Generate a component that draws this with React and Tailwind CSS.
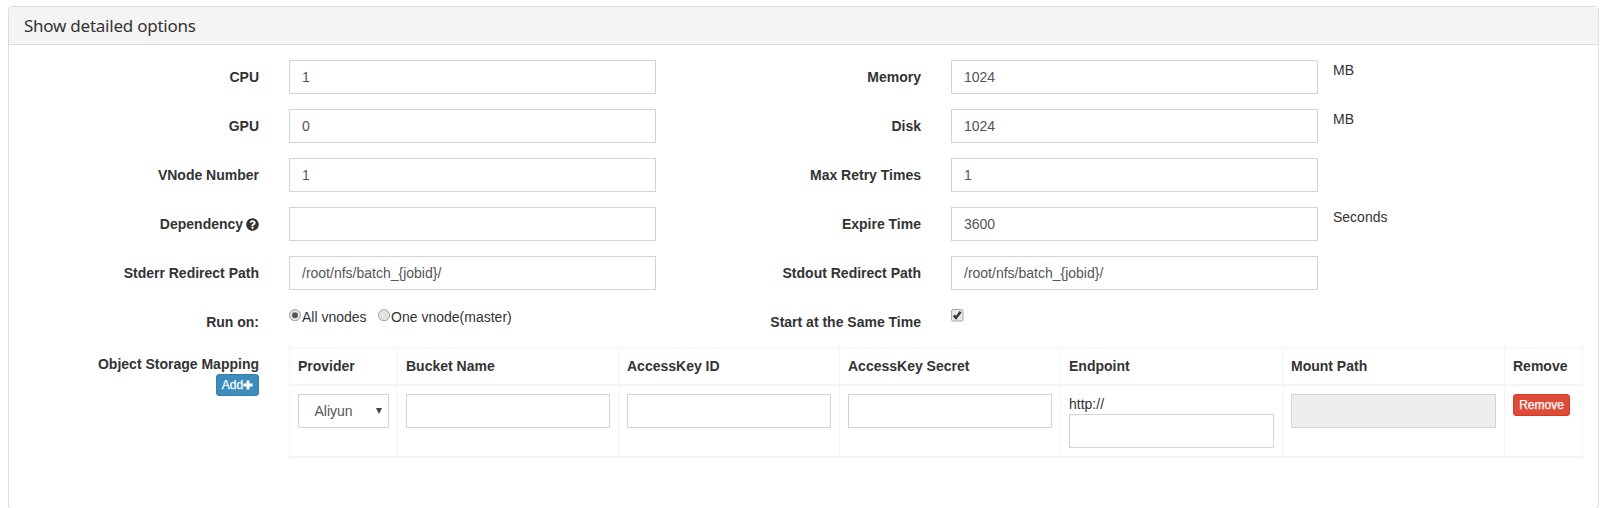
import { FaQuestionCircle } from "react-icons/fa";

const labelText = "font-bold text-[#333]";
const inputBase =
  "block h-[34px] w-full rounded-none border border-[#d2d4d9] bg-white px-3 text-[14px] leading-5 text-[#555] outline-none";

function Label({ children }) {
  return (
    <label className={`${labelText} w-[265px] shrink-0 pr-[15px] pt-[7px] text-right`}>
      {children}
    </label>
  );
}

function Field({ label, value, unit }) {
  return (
    <div className="flex">
      <Label>{label}</Label>
      <div className="w-[397px] shrink-0 px-[15px]">
        <input className={inputBase} defaultValue={value} />
      </div>
      {unit && <span>{unit}</span>}
    </div>
  );
}

function Radio({ checked }) {
  return (
    <svg className="h-[13px] w-[13px]" viewBox="0 0 13 13">
      <circle cx="6" cy="6.2" r="5.6" fill="#e2e2e2" stroke="#a4a4a4" />
      {checked && <circle cx="6" cy="6.2" r="2.9" fill="#555" />}
    </svg>
  );
}

function Checkbox() {
  return (
    <svg className="h-[13px] w-[13px]" viewBox="0 0 13 13">
      <rect x="0.5" y="0.5" width="11.5" height="11.5" rx="1.5" fill="#e6e6e6" stroke="#a8a8a8" />
      <path d="M2.8 6.4 L5 8.9 L9.6 2.8" fill="none" stroke="#333" strokeWidth="2.4" />
    </svg>
  );
}

const leftFields = [
  { label: "CPU", value: "1" },
  { label: "GPU", value: "0" },
  { label: "VNode Number", value: "1" },
  {
    label: (
      <>
        Dependency <FaQuestionCircle className="-ml-px inline h-[13px] w-[13px] align-[-2px]" />
      </>
    ),
    value: "",
  },
  { label: "Stderr Redirect Path", value: "/root/nfs/batch_{jobid}/" },
];

const rightFields = [
  { label: "Memory", value: "1024", unit: "MB" },
  { label: "Disk", value: "1024", unit: "MB" },
  { label: "Max Retry Times", value: "1" },
  { label: "Expire Time", value: "3600", unit: "Seconds" },
  { label: "Stdout Redirect Path", value: "/root/nfs/batch_{jobid}/" },
];

const headings = [
  "Provider",
  "Bucket Name",
  "AccessKey ID",
  "AccessKey Secret",
  "Endpoint",
  "Mount Path",
  "Remove",
];

const cell = "border-l border-[#f4f4f4] p-2";

export default function App() {
  return (
    <div className="h-[508px] overflow-hidden bg-white pl-2 pt-1.5 font-['Liberation_Sans',Arial,sans-serif] text-[14px] leading-5 text-[#333]">
      <section className="h-[503px] w-[1591px] rounded-[4px] border border-[#ddd]">
        <header className="h-[38px] rounded-t-[3px] border-b border-[#ddd] bg-[#f4f4f4] pl-[15px] font-['Noto_Sans',sans-serif] text-[17px] leading-[38px] tracking-[-0.24px]">
          Show detailed options
        </header>

        <div className="pt-[15px]">
          <div className="flex">
            <div className="flex w-[662px] flex-col gap-[15px]">
              {leftFields.map((f, i) => (
                <Field key={i} {...f} />
              ))}
              <div className="flex h-[27px]">
                <Label>Run on:</Label>
                <div className="flex pl-[15px]">
                  <span className="flex pt-[4px]">
                    <Radio checked />
                  </span>
                  <span className="pt-[2px]">All vnodes</span>
                  <span className="flex pl-[11px] pt-[4px]">
                    <Radio />
                  </span>
                  <span className="pl-[0.5px] pt-[2px]">One vnode(master)</span>
                </div>
              </div>
            </div>
            <div className="flex flex-col gap-[15px]">
              {rightFields.map((f, i) => (
                <Field key={i} {...f} />
              ))}
              <div className="flex h-[27px]">
                <Label>Start at the Same Time</Label>
                <span className="pl-[15px] pt-[4px]">
                  <Checkbox />
                </span>
              </div>
            </div>
          </div>

          <div className="mt-[15px] flex">
            <div className="flex w-[265px] shrink-0 flex-col items-end pr-[15px] pt-[7px]">
              <span className={labelText}>Object Storage Mapping</span>
              <button className="flex h-[22px] w-[43px] items-center justify-center rounded-[3px] border border-[#367fa9] bg-[#3c8dbc] text-[12px] leading-[18px] text-white [-webkit-text-stroke:0.25px_white]">
                Add
                <svg className="h-[10px] w-[10px]" viewBox="0 0 10 10">
                  <path d="M3.6 0.5H6.4V3.6H9.6V6.4H6.4V9.5H3.6V6.4H0.4V3.6H3.6Z" fill="#fff" stroke="none" />
                </svg>
              </button>
            </div>

            <div className="ml-[15px] w-[1294px] border-r border-[#f4f4f4]">
              <div className="grid grid-cols-[108px_221px_221px_221px_222px_222px_78px] border-b-2 border-t border-[#f4f4f4]">
                {headings.map((h) => (
                  <div key={h} className={`${cell} font-bold`}>
                    {h}
                  </div>
                ))}
              </div>
              <div className="grid grid-cols-[108px_221px_221px_221px_222px_222px_78px] border-b-2 border-[#f4f4f4]">
                <div className={cell}>
                  <div className="flex h-[34px] w-[91px] items-center justify-between border border-[#d2d4d9] pl-[15.5px] pr-[6px] text-[#555]">
                    Aliyun
                    <svg className="h-[6px] w-[6px]" viewBox="0 0 6 6">
                      <path d="M0 0H6L3 6Z" fill="#444" />
                    </svg>
                  </div>
                </div>
                <div className={cell}>
                  <input className={inputBase} />
                </div>
                <div className={cell}>
                  <input className={inputBase} />
                </div>
                <div className={cell}>
                  <input className={inputBase} />
                </div>
                <div className={cell}>
                  <div>http://</div>
                  <input className={inputBase} />
                </div>
                <div className={cell}>
                  <div className="h-[34px] border border-[#d2d4d9] bg-[#eee]" />
                </div>
                <div className={cell}>
                  <button className="flex h-[22px] w-[57px] items-center justify-center rounded-[3px] border border-[#d73925] bg-[#dd4b39] text-[12px] leading-[18px] text-white [-webkit-text-stroke:0.25px_white]">
                    Remove
                  </button>
                </div>
              </div>
            </div>
          </div>
        </div>
      </section>
    </div>
  );
}
